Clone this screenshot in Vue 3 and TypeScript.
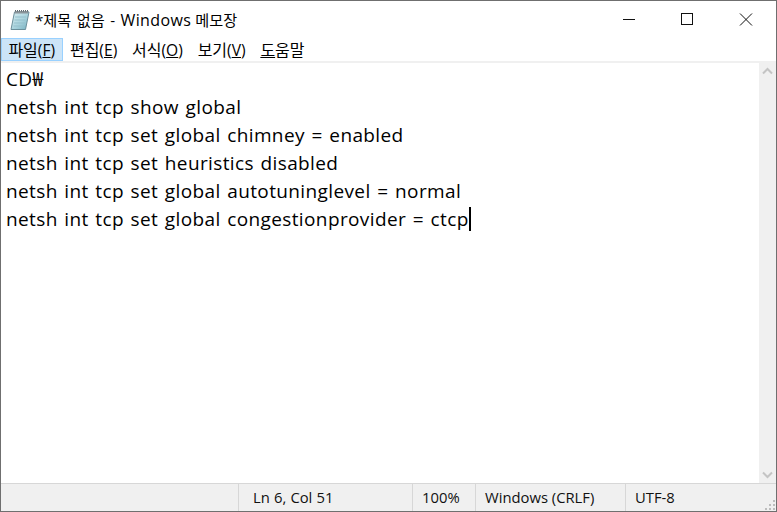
<script setup lang="ts">
const menus = [
  { label: '파일', key: 'F', active: true },
  { label: '편집', key: 'E', active: false },
  { label: '서식', key: 'O', active: false },
  { label: '보기', key: 'V', active: false },
]
const lines = [
  'CD₩',
  'netsh int tcp show global',
  'netsh int tcp set global chimney = enabled',
  'netsh int tcp set heuristics disabled',
  'netsh int tcp set global autotuninglevel = normal',
]
const lastLine = 'netsh int tcp set global congestionprovider = ctcp'
</script>

<template>
  <div class="window">
    <header class="titlebar">
      <svg class="app-icon" width="20" height="22" viewBox="0 0 20 22">
        <defs>
          <linearGradient id="pad" x1="0" y1="0" x2="1" y2="1">
            <stop offset="0" stop-color="#dcf0f4" />
            <stop offset="0.55" stop-color="#a9d3dd" />
            <stop offset="1" stop-color="#74afc0" />
          </linearGradient>
        </defs>
        <path d="M4.5 3 H19 L15.5 20.5 H1 Z" fill="url(#pad)" stroke="#6b8f9b" stroke-width="1" />
        <path d="M5 2 H18.5 L18 4.5 H4.5 Z" fill="#8a9499" />
        <path d="M5.5 2.5 V1 M7.5 2.5 V1 M9.5 2.5 V1 M11.5 2.5 V1 M13.5 2.5 V1 M15.5 2.5 V1 M17.5 2.5 V1" stroke="#5f6a70" stroke-width="1" />
        <path d="M5 8 H16 M4.5 11 H15.5 M4 14 H15 M3.5 17 H14" stroke="#94bfcb" stroke-width="1" />
      </svg>
      <span class="title"><span class="t-ko t-lead">*제목 없음 - </span><span class="t-en">Windows</span><span class="t-ko"> 메모장</span></span>
      <div class="controls">
        <svg class="ctl" width="58" height="37" viewBox="0 0 58 37"><path d="M23 18.5 H35" stroke="#111" stroke-width="1" fill="none" /></svg>
        <svg class="ctl" width="58" height="37" viewBox="0 0 58 37"><rect x="23.5" y="12.5" width="11" height="11" stroke="#111" stroke-width="1" fill="none" /></svg>
        <svg class="ctl" width="60" height="37" viewBox="0 0 60 37"><path d="M24 12.5 L36 24.5 M36 12.5 L24 24.5" stroke="#111" stroke-width="1" fill="none" /></svg>
      </div>
    </header>

    <nav class="menubar">
      <span v-for="m in menus" :key="m.key" class="menu" :class="{ active: m.active }">{{ m.label }}<span class="paren">(<u>{{ m.key }}</u>)</span></span>
      <span class="menu"><u>도</u>움말</span>
    </nav>

    <main class="body">
      <div class="editor">
        <div v-for="(l, i) in lines" :key="i" class="line">{{ l }}</div>
        <div class="line">{{ lastLine }}<span class="caret"></span></div>
      </div>
      <aside class="scrollbar">
        <svg width="17" height="17" viewBox="0 0 17 17"><path d="M4 10.5 L8.5 6 L13 10.5" stroke="#c4c4c4" stroke-width="2" fill="none" /></svg>
        <svg width="17" height="17" viewBox="0 0 17 17"><path d="M4 6.5 L8.5 11 L13 6.5" stroke="#c4c4c4" stroke-width="2" fill="none" /></svg>
      </aside>
    </main>

    <footer class="statusbar">
      <div class="cell spacer"></div>
      <div class="cell pos">Ln 6, Col 51</div>
      <div class="cell zoom">100%</div>
      <div class="cell eol">Windows (CRLF)</div>
      <div class="cell enc">UTF-8</div>
      <svg class="grip" width="12" height="12" viewBox="0 0 12 12">
        <path d="M9 1h2v2H9z M5 5h2v2H5z M9 5h2v2H9z M1 9h2v2H1z M5 9h2v2H5z M9 9h2v2H9z" fill="#bdbdbd" />
      </svg>
    </footer>
  </div>
</template>

<style>
html, body { margin: 0; padding: 0; background: #fff; }
</style>

<style scoped>
.window {
  width: 777px;
  height: 512px;
  box-sizing: border-box;
  border: 1px solid #6f6f6f;
  display: flex;
  flex-direction: column;
  background: #fff;
  overflow: hidden;
  font-family: "Noto Sans CJK KR", "Open Sans", sans-serif;
  color: #000;
}
.titlebar {
  height: 37px;
  display: flex;
  align-items: center;
  flex: none;
}
.app-icon { margin-left: 9px; margin-top: 1px; flex: none; }
.title {
  margin-left: 5px;
  line-height: 37px;
  color: #000;
  white-space: pre;
}
.t-ko { font-family: "Open Sans", "Noto Sans CJK KR", sans-serif; font-size: 15.2px; }
.t-lead { word-spacing: 1.5px; }
.t-en { font-family: "Open Sans", sans-serif; font-size: 16px; letter-spacing: 0.4px; }
.controls { margin-left: auto; display: flex; }
.ctl { display: block; }
.menubar {
  height: 23px;
  display: flex;
  flex: none;
  font-size: 16px;
  border-bottom: 2px solid #f0f0f0;
}
.menu {
  box-sizing: border-box;
  height: 23px;
  padding: 0 6.4px;
  border: 1px solid transparent;
  line-height: 20px;
  white-space: nowrap;
}
.menu.active { background: #cce4f7; border-color: #99d1ff; }
.paren { font-family: "Open Sans", sans-serif; font-size: 15.6px; }
.body { flex: 1; display: flex; min-height: 0; }
.editor {
  flex: 1;
  padding: 2px 0 0 5px;
  font-family: "Open Sans", "Noto Sans CJK KR", sans-serif;
  font-size: 19px;
  letter-spacing: 0.38px;
  word-spacing: 1.3px;
  line-height: 28px;
  white-space: pre;
}
.line { height: 28px; display: flex; align-items: center; }
.caret {
  display: inline-block;
  width: 2px;
  height: 24px;
  background: #000;
}
.scrollbar {
  width: 17px;
  flex: none;
  background: #f0f0f0;
  display: flex;
  flex-direction: column;
  justify-content: space-between;
}
.scrollbar svg { display: block; }
.statusbar {
  height: 28px;
  flex: none;
  box-sizing: border-box;
  border-top: 1px solid #d7d7d7;
  background: #f0f0f0;
  display: flex;
  position: relative;
  font-family: "Open Sans", sans-serif;
  font-size: 14.8px;
  line-height: 26px;
  color: #111;
}
.cell {
  box-sizing: border-box;
  border-left: 1px solid #d7d7d7;
  padding-left: 14px;
  white-space: nowrap;
}
.spacer { width: 237px; border-left: none; }
.pos { width: 174px; word-spacing: 0.3px; }
.zoom { width: 63px; padding-left: 9px; }
.eol { width: 150px; padding-left: 9px; }
.enc { flex: 1; padding-left: 9px; }
.grip { position: absolute; right: 0; bottom: 0; }
</style>
